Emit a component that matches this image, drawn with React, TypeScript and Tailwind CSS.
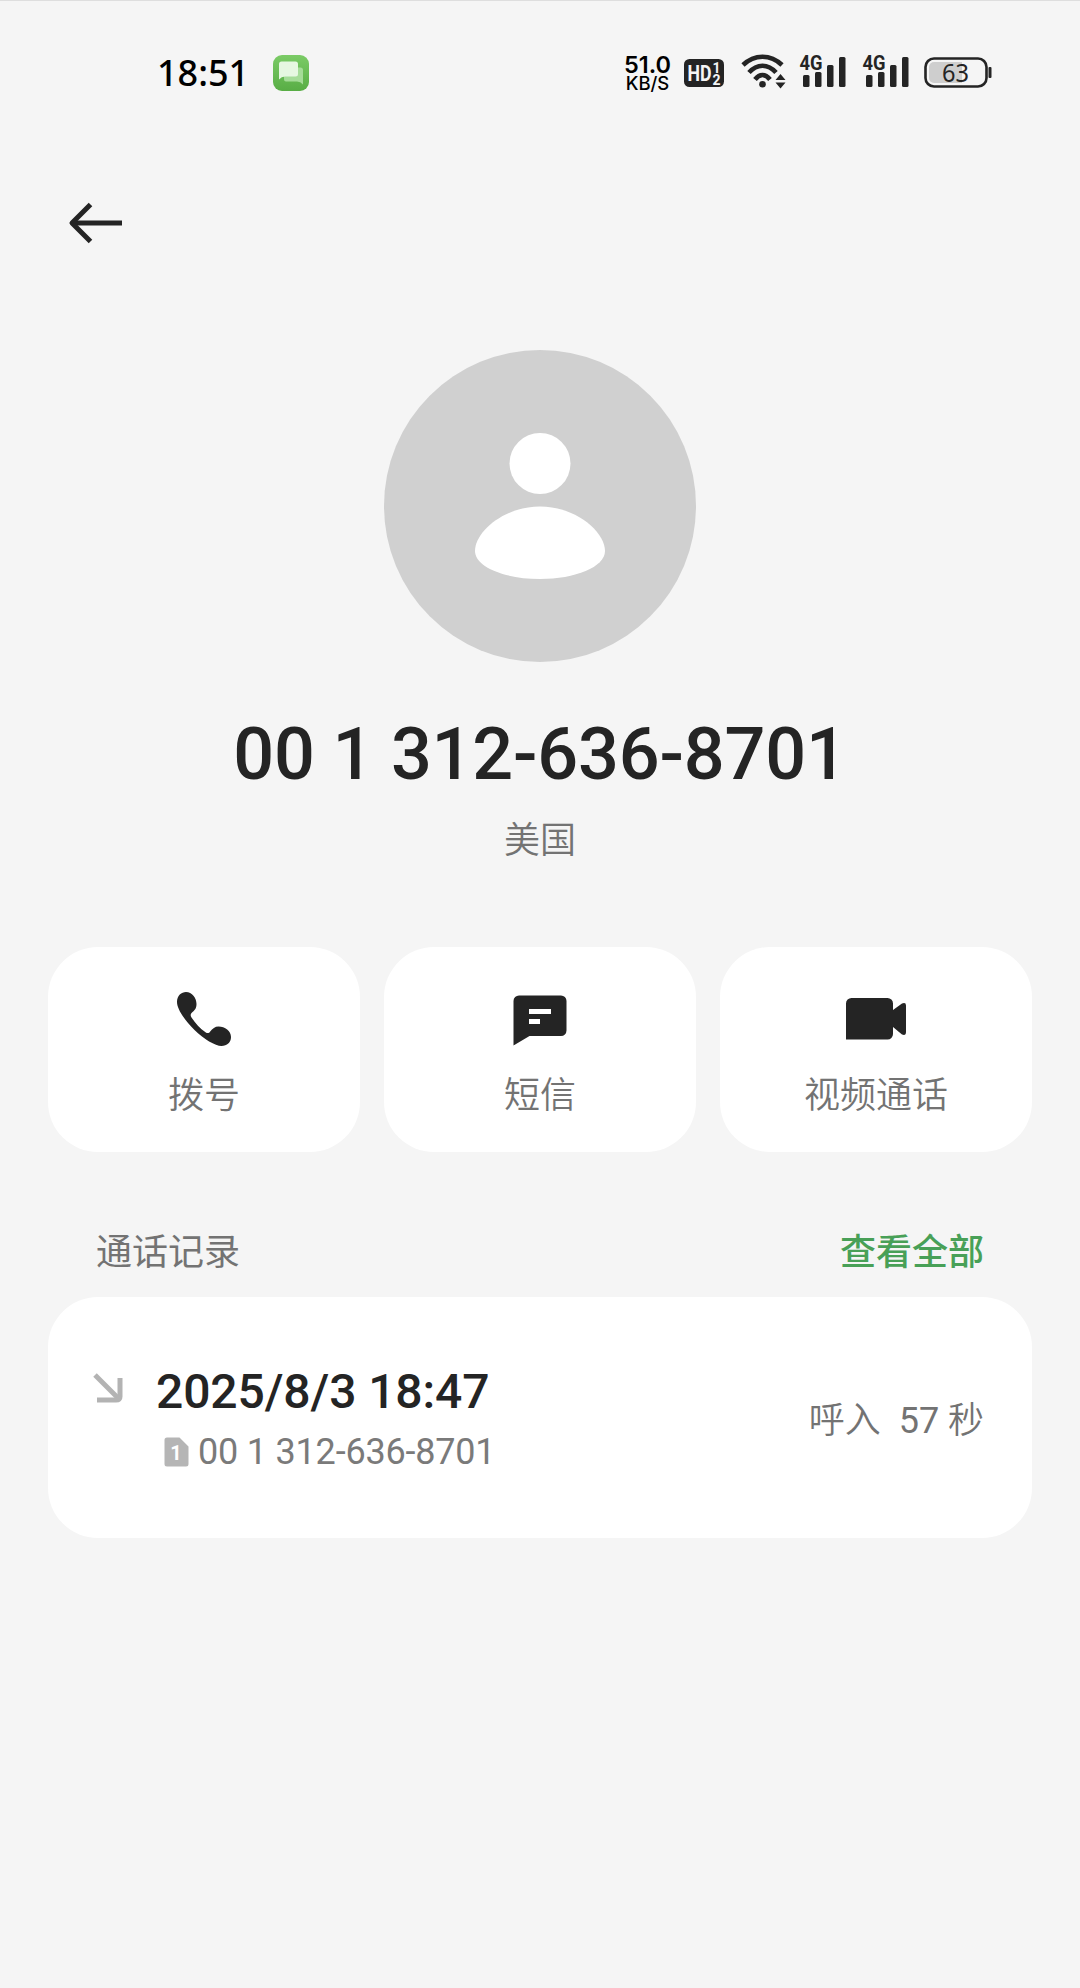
const phoneNumber = "00 1 312-636-8701";

const PhoneIcon = () => (
  <svg width="60" height="60" viewBox="0 0 60 60" fill="#242424">
    <path d="M3 13C3 6.500 7.500 3 12 3C18 3 22.500 9 22.500 15C22.500 19.500 20.500 21.500 18 23.500C16.300 24.900 16.300 26.500 17.500 28.500C21.500 34.500 26 39.500 31.500 43.200C33.500 44.500 35 44.300 36.200 42.500C38.500 39.500 41 37.500 44.500 37.500C51 37.500 57 42 57 48C57 53.500 53 57 47.500 57C41.500 57 29.500 50 20.500 41C10.500 31 3 20 3 13Z" />
  </svg>
);

const MessageIcon = () => (
  <svg width="60" height="60" viewBox="0 0 60 60">
    <path
      d="M3.500 12a5.500 5.500 0 0 1 5.500-5.500h42a5.500 5.500 0 0 1 5.500 5.500v29.500a5.500 5.500 0 0 1-5.500 5.500H19.500L3.500 56.500Z"
      fill="#242424"
    />
    <path d="M19 20h22v5H19zM19 30h11v5H19z" fill="#fff" />
  </svg>
);

const VideoIcon = () => (
  <svg width="60" height="60" viewBox="0 0 60 60" fill="#242424">
    <path d="M0 14.500a5.500 5.500 0 0 1 5.500-5.500H41.500a5.500 5.500 0 0 1 5.500 5.500V21L56 14.500Q60 13 60 16.500V43Q60 47 56 45.500L47 38V45a5.500 5.500 0 0 1-5.500 5.500H0Z" />
  </svg>
);

const actions = [
  { icon: PhoneIcon, label: "拨号" },
  { icon: MessageIcon, label: "短信" },
  { icon: VideoIcon, label: "视频通话" },
];

const AppBadge = () => (
  <svg width="36" height="36" viewBox="0 0 36 36">
    <defs>
      <linearGradient id="badge" x1="0" y1="0" x2="0" y2="1">
        <stop offset="0" stopColor="#7bcb66" />
        <stop offset="1" stopColor="#58ad45" />
      </linearGradient>
    </defs>
    <rect width="36" height="36" rx="9" fill="url(#badge)" />
    <path d="M13 12.500h14.500a2.500 2.500 0 0 1 2.500 2.500v14.500q-2.500-3-6-3H13a2 2 0 0 1-2-2v-10a2 2 0 0 1 2-2Z" fill="#a5dc98" />
    <path d="M8.500 6.500h14a2.500 2.500 0 0 1 2.500 2.500v10a2.500 2.500 0 0 1-2.500 2.500H12q-3.500 0-6 3V9a2.500 2.500 0 0 1 2.500-2.500Z" fill="#e6f7e1" />
  </svg>
);

const HdIcon = () => (
  <svg width="40" height="28" viewBox="0 0 40 28" className="font-['Roboto',sans-serif] font-bold">
    <rect width="40" height="28" rx="5.500" fill="#242424" />
    <text x="3.500" y="22" fontSize="21.500" textLength="24" lengthAdjust="spacingAndGlyphs" fill="#f5f5f5">HD</text>
    <text x="28.500" y="13.500" fontSize="14" fill="#f5f5f5">1</text>
    <text x="28.500" y="25.500" fontSize="14" fill="#f5f5f5">2</text>
  </svg>
);

const WifiIcon = () => (
  <svg width="46" height="36" viewBox="0 0 46 36" className="overflow-visible">
    <g fill="none" stroke="#242424" strokeWidth="4.600">
      <path d="M2 10Q10.500 1.700 21.500 1.700Q32.500 1.700 41 10" />
      <path d="M8 17.500Q14 10.700 21.500 10.700Q29 10.700 35 17.500" />
      <path d="M14 24.500Q17.500 20 21.500 20Q25.500 20 29 24.500" />
    </g>
    <circle cx="21.500" cy="29.300" r="3.300" fill="#242424" />
    <path d="M34.500 25L39.500 19L44.500 25ZM34.500 27.500H44.500L39.500 33.500Z" fill="#242424" />
  </svg>
);

const SignalIcon = () => (
  <svg width="46" height="38" viewBox="0 0 46 38" fill="#242424" className="overflow-visible">
    <text x="-0.500" y="16" fontSize="21" textLength="23" lengthAdjust="spacingAndGlyphs" className="font-['Roboto',sans-serif] font-bold">4G</text>
    <rect x="3" y="21" width="6.500" height="12" rx="1.500" />
    <rect x="15" y="18" width="6.500" height="15" rx="1.500" />
    <rect x="27" y="11" width="6.500" height="22" rx="1.500" />
    <rect x="39" y="3" width="6.500" height="30" rx="1.500" />
  </svg>
);

const BatteryIcon = () => (
  <svg width="68" height="32" viewBox="0 0 68 32" className="overflow-visible">
    <rect x="1.500" y="1.500" width="61" height="28" rx="8.500" fill="none" stroke="#242424" strokeWidth="2.600" />
    <path d="M10 5H38V26H10a5 5 0 0 1-5-5v-11a5 5 0 0 1 5-5Z" fill="#cecece" />
    <rect x="64.500" y="10" width="3" height="11" rx="1" fill="#242424" />
    <text x="18" y="24.500" fontSize="24.500" textLength="27" lengthAdjust="spacingAndGlyphs" fill="#242424" className="font-['Noto_Sans',sans-serif]">63</text>
  </svg>
);

const StatusBar = () => (
  <div className="flex h-[145px] w-full pt-[54px] pr-[88px] pl-[157px]">
    <div className="flex h-9 items-center">
      <span className="w-[116px] font-['Noto_Sans',sans-serif] text-[36px] leading-9 font-medium text-black">18:51</span>
      <AppBadge />
    </div>
    <div className="ml-auto flex h-9 items-center">
      <div className="flex w-[60px] flex-col items-center pr-[13px] font-['Inter',sans-serif] text-black">
        <span className="text-[23.500px] leading-[20px] font-semibold">51.0</span>
        <span className="text-[18.500px] leading-[17px] font-medium">KB/S</span>
      </div>
      <HdIcon />
      <div className="ml-[17px]"><WifiIcon /></div>
      <div className="ml-[13px]"><SignalIcon /></div>
      <div className="ml-[17px]"><SignalIcon /></div>
      <div className="ml-[15px]"><BatteryIcon /></div>
    </div>
  </div>
);

const CallLog = () => (
  <div className="mt-[18px] flex h-[241px] rounded-[50px] bg-white pr-12 pl-[45px]">
    <svg width="30" height="30" viewBox="0 0 30 30" className="mt-[76px]" fill="none" stroke="#b3b3b3" strokeWidth="5">
      <path d="M2 2L25.500 25.500" />
      <path d="M27 5V23.500Q27 27 23 27H4" />
    </svg>
    <div className="ml-[33px] pt-[67px]">
      <div className="text-[48px] leading-[56px] font-medium tracking-[-0.1px] text-[#242424]">2025/8/3 18:47</div>
      <div className="mt-1 flex h-[56px] items-center pl-2">
        <svg width="25" height="30" viewBox="0 0 25 30">
          <path d="M3 .5h12.500l9 9V27a2.500 2.500 0 0 1-2.500 2.500H3A2.500 2.500 0 0 1 .5 27V3A2.500 2.500 0 0 1 3 .5Z" fill="#b5b5b5" />
          <text x="12" y="22.500" fontSize="20" textAnchor="middle" fill="#fff" className="font-bold">1</text>
        </svg>
        <span className="ml-[9px] text-[36px] leading-[42px] tracking-[-0.2px] text-[#7a7a7a]">{phoneNumber}</span>
      </div>
    </div>
    <div className="ml-auto flex items-center gap-[18px] pt-[6px] text-[36px] leading-[52px] font-[350] text-[#737373]">
      <span>呼入</span>
      <span><span className="font-normal">57</span> 秒</span>
    </div>
  </div>
);

export default function App() {
  return (
    <div className="min-h-[1988px] w-[1080px] border-t border-[#dedede] bg-[#f5f5f5] font-['Roboto','Noto_Sans_CJK_SC',sans-serif]">
      <StatusBar />
      <header className="flex h-[154px] items-center pl-[67px]">
        <svg width="56" height="44" viewBox="0 0 56 44" fill="none" stroke="#242424" strokeWidth="5">
          <path d="M5 22H55" />
          <path d="M23.500 3.500L5 22L23.500 40.500" strokeLinejoin="round" />
        </svg>
      </header>

      <main className="px-12 pt-[50px]">
        <div className="flex flex-col items-center">
          <svg width="312" height="312" viewBox="0 0 312 312">
            <circle cx="156" cy="156" r="156" fill="#d0d0d0" />
            <circle cx="156" cy="113.500" r="30.500" fill="#fff" />
            <path d="M156 156.500C192 156.500 221 182 221 201C221 217 191 229 156 229C121 229 91 217 91 201C91 182 120 156.500 156 156.500Z" fill="#fff" />
          </svg>
          <h1 className="mt-[51px] text-[72px] leading-[84px] font-medium tracking-[-0.2px] whitespace-nowrap text-[#242424]">{phoneNumber}</h1>
          <p className="mt-[18px] text-[36px] leading-[52px] font-[350] text-[#737373]">美国</p>
        </div>

        <div className="mt-[80px] grid grid-cols-3 gap-6">
          {actions.map((action) => (
            <button key={action.label} className="flex h-[205px] flex-col items-center rounded-[50px] bg-white pt-[42px]">
              <action.icon />
              <span className="mt-[21px] text-[36px] leading-[52px] font-[350] text-[#737373]">{action.label}</span>
            </button>
          ))}
        </div>

        <div className="mt-[75px] flex justify-between px-12 text-[36px] leading-[52px]">
          <h2 className="text-[#737373]">通话记录</h2>
          <a className="font-medium text-[#48a057]">查看全部</a>
        </div>
        <CallLog />
      </main>
    </div>
  );
}
